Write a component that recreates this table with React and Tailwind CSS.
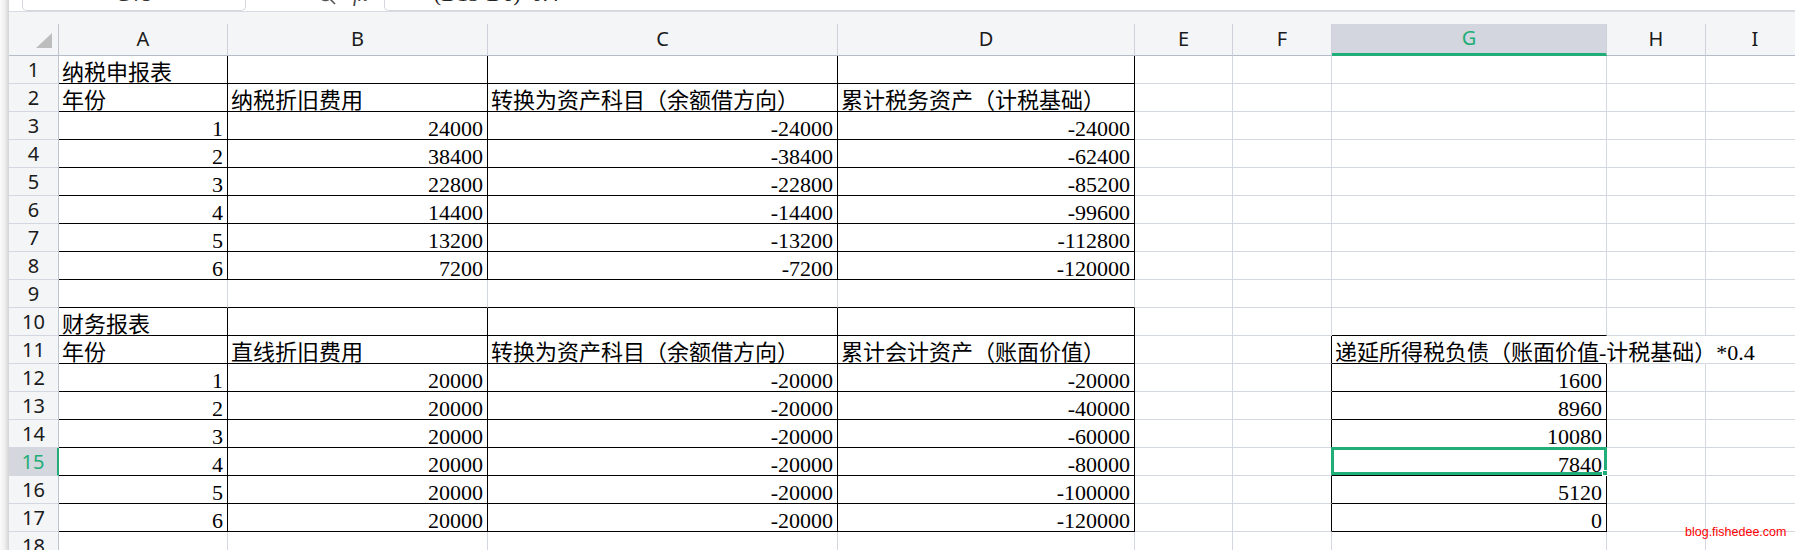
import React from "react";

const COL_LETTERS = ["A", "B", "C", "D", "E", "F", "G", "H", "I"];

const T = (v) => ({ t: v });
const N = (v) => ({ n: v });

const DATA = {
  1: { 0: T("纳税申报表") },
  2: { 0: T("年份"), 1: T("纳税折旧费用"), 2: T("转换为资产科目（余额借方向）"), 3: T("累计税务资产（计税基础）") },
  3: { 0: N("1"), 1: N("24000"), 2: N("-24000"), 3: N("-24000") },
  4: { 0: N("2"), 1: N("38400"), 2: N("-38400"), 3: N("-62400") },
  5: { 0: N("3"), 1: N("22800"), 2: N("-22800"), 3: N("-85200") },
  6: { 0: N("4"), 1: N("14400"), 2: N("-14400"), 3: N("-99600") },
  7: { 0: N("5"), 1: N("13200"), 2: N("-13200"), 3: N("-112800") },
  8: { 0: N("6"), 1: N("7200"), 2: N("-7200"), 3: N("-120000") },
  10: { 0: T("财务报表") },
  11: {
    0: T("年份"),
    1: T("直线折旧费用"),
    2: T("转换为资产科目（余额借方向）"),
    3: T("累计会计资产（账面价值）"),
    6: T("递延所得税负债（账面价值-计税基础）*0.4"),
  },
  12: { 0: N("1"), 1: N("20000"), 2: N("-20000"), 3: N("-20000"), 6: N("1600") },
  13: { 0: N("2"), 1: N("20000"), 2: N("-20000"), 3: N("-40000"), 6: N("8960") },
  14: { 0: N("3"), 1: N("20000"), 2: N("-20000"), 3: N("-60000"), 6: N("10080") },
  15: { 0: N("4"), 1: N("20000"), 2: N("-20000"), 3: N("-80000"), 6: N("7840") },
  16: { 0: N("5"), 1: N("20000"), 2: N("-20000"), 3: N("-100000"), 6: N("5120") },
  17: { 0: N("6"), 1: N("20000"), 2: N("-20000"), 3: N("-120000"), 6: N("0") },
};

function rightClass(r, c) {
  const inTable = (r >= 1 && r <= 8) || (r >= 10 && r <= 17);
  if (inTable && c <= 3) return "border-r-black";
  if (r >= 11 && r <= 17 && c === 5) return "border-r-black";
  if (r >= 12 && r <= 17 && c === 6) return "border-r-black";
  if (r === 11 && (c === 6 || c === 7)) return "border-r-transparent";
  return "border-r-[#d3d7e0]";
}

function bottomClass(r, c) {
  if (c <= 3 && r >= 1 && r <= 17) return "border-b-black";
  if (c === 6 && r >= 10 && r <= 17) return "border-b-black";
  return "border-b-[#d3d7e0]";
}

function Cell({ r, c }) {
  const cell = DATA[r] && DATA[r][c];
  const selected = r === 15 && c === 6;
  const base =
    "flex items-end border-r border-b leading-[20px] text-[22px] text-black font-['Liberation_Serif','Noto_Sans_CJK_SC',serif] whitespace-nowrap " +
    rightClass(r, c) +
    " " +
    bottomClass(r, c);
  const align = cell && cell.n !== undefined ? " justify-end pr-[4px]" : " justify-start pl-[3px]";
  return (
    <div className={base + align + (selected ? " relative" : "")}>
      {cell ? <span>{cell.n !== undefined ? cell.n : cell.t}</span> : null}
      {selected ? (
        <div className="absolute top-[-1px] left-[-1px] right-[-1px] bottom-0 border-[3px] border-[#21ad77]">
          <div className="absolute right-[-4px] bottom-[-4px] w-[6px] h-[6px] bg-[#21ad77] border border-white"></div>
        </div>
      ) : null}
    </div>
  );
}

function RowHeader({ r }) {
  const active = r === 15;
  return (
    <div
      className={
        "flex items-center justify-center border-b border-b-[#d3d7e0] text-[20px] leading-none font-['Noto_Sans',sans-serif] " +
        (active
          ? "bg-[#d4d7de] text-[#21ad77] border-r-2 border-r-[#21ad77]"
          : "bg-[#f4f5f7] text-[#1b1b1b] border-r border-r-[#bfc4d1]")
      }
    >
      {r}
    </div>
  );
}

function ColHeader({ letter }) {
  const active = letter === "G";
  return (
    <div className="flex flex-col bg-[#f4f5f7]">
      <div className="h-[12px]"></div>
      <div
        className={
          "flex-1 flex items-center justify-center text-[20px] leading-none font-['Noto_Sans',sans-serif] border-r border-r-[#cdd1dc] " +
          (active
            ? "bg-[#d3d6de] text-[#21ad77] border-b-[3px] border-b-[#21ad77]"
            : "text-[#1b1b1b] border-b border-b-[#b5bbc9]")
        }
      >
        <span className="-mt-[2px]">{letter}</span>
      </div>
    </div>
  );
}

function Corner() {
  return (
    <div className="flex flex-col bg-[#f4f5f7]">
      <div className="h-[12px]"></div>
      <div className="flex-1 flex items-end justify-end pr-[6px] pb-[7px] border-r border-r-[#bfc4d1] border-b border-b-[#b5bbc9]">
        <svg width="16" height="15" viewBox="0 0 16 15">
          <polygon points="16,0 16,15 0,15" fill="#bdbdbd" />
        </svg>
      </div>
    </div>
  );
}

export default function App() {
  const rows = [];
  for (let r = 1; r <= 18; r++) rows.push(r);
  return (
    <div className="w-[1795px] h-[550px] overflow-hidden bg-white flex relative">
      <div className="w-[9px] h-full shrink-0 bg-linear-to-r from-[#fbfbfb] via-[#f0f0f0] to-[#d4d4d4]"></div>
      <div className="flex-1 flex flex-col min-w-0">
        {/* formula bar remnant */}
        <div className="h-[12px] shrink-0 border-b border-b-[#d8dbe1] flex items-start">
          <div className="ml-[13px] w-[224px] h-[11px] border border-t-0 border-[#d3d6dc] rounded-b-[5px] overflow-hidden flex justify-center">
            <span className="text-[20px] leading-[20px] -mt-[16px] text-[#333] font-['Noto_Sans',sans-serif]">G15</span>
          </div>
          <div className="ml-[71px] h-[11px] overflow-hidden">
            <svg width="20" height="20" viewBox="0 0 20 20" className="-mt-[14px]" fill="none" stroke="#555" strokeWidth="1.6">
              <circle cx="8.5" cy="8.5" r="6" />
              <line x1="13" y1="13" x2="18" y2="18" />
            </svg>
          </div>
          <div className="ml-[16px] h-[11px] overflow-hidden">
            <span className="block text-[20px] leading-[20px] -mt-[16px] italic text-[#444] font-['Liberation_Serif',serif]">fx</span>
          </div>
          <div className="ml-[17px] flex-1 h-[11px] border-l border-b border-[#d3d6dc] rounded-bl-[5px] overflow-hidden pl-[36px]">
            <span className="block text-[22px] leading-[20px] -mt-[16px] text-[#222] font-['Liberation_Serif','Noto_Sans_CJK_SC',serif]">=(D15-D6)*0.4</span>
          </div>
        </div>
        <div className="grid grid-cols-[50px_169px_260px_350px_297px_98px_99px_275px_99px_99px] grid-rows-[44px_repeat(18,28px)]">
          <Corner />
          {COL_LETTERS.map((l) => (
            <ColHeader key={l} letter={l} />
          ))}
          {rows.map((r) => (
            <React.Fragment key={r}>
              <RowHeader r={r} />
              {COL_LETTERS.map((l, c) => (
                <Cell key={l} r={r} c={c} />
              ))}
            </React.Fragment>
          ))}
        </div>
      </div>
      <div className="absolute left-[1685px] top-[525px] text-[12.5px] leading-[14px] text-[#ff0000] font-['Liberation_Sans',sans-serif]">
        blog.fishedee.com
      </div>
    </div>
  );
}
